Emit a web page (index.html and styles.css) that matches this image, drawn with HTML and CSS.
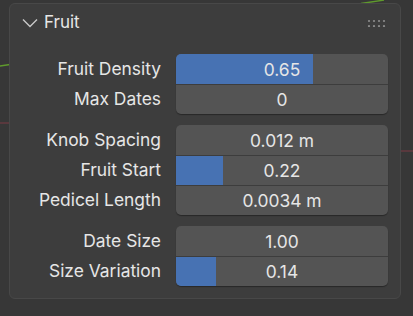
FILE: index.html
```html
<!DOCTYPE html>
<html lang="en">
<head>
    <meta charset="UTF-8">
    <title>Fruit</title>
<link rel="stylesheet" href="styles.css">
</head>
<body>
    <div id="viewport">
        <svg class="grid-lines" width="413" height="316" viewBox="0 0 413 316">
            <line x1="361" y1="3.5" x2="384" y2="0" stroke="#5f9a2c" stroke-width="1.3"/>
            <line x1="0" y1="66" x2="10" y2="64.5" stroke="#5f9a2c" stroke-width="1.3"/>
            <line x1="0" y1="123" x2="10" y2="123" stroke="#7c3a44" stroke-width="1"/>
            <line x1="400" y1="151" x2="413" y2="151" stroke="#7c3a44" stroke-width="1"/>
        </svg>

        <div class="panel">
            <div class="panel-head">
                <svg class="chevron" width="16" height="10" viewBox="0 0 16 10">
                    <polyline points="1,1.5 8,8.5 15,1.5" fill="none" stroke="#c8c8c8" stroke-width="1.4"/>
                </svg>
                <span class="panel-title">Fruit</span>
                <svg class="grip" width="20" height="8" viewBox="0 0 20 8">
                    <g fill="#8c8c8c">
                        <circle cx="2" cy="2" r="1.1"/><circle cx="7" cy="2" r="1.1"/>
                        <circle cx="12" cy="2" r="1.1"/><circle cx="17" cy="2" r="1.1"/>
                        <circle cx="2" cy="7" r="1.1"/><circle cx="7" cy="7" r="1.1"/>
                        <circle cx="12" cy="7" r="1.1"/><circle cx="17" cy="7" r="1.1"/>
                    </g>
                </svg>
            </div>

            <div class="panel-body">
                <div class="group">
                    <div class="labels">
                        <div class="label">Fruit Density</div>
                        <div class="label">Max Dates</div>
                    </div>
                    <div class="fields">
                        <div class="field"><div class="fill" style="width: 64.5%"></div><span class="value">0.65</span></div>
                        <div class="field"><span class="value">0</span></div>
                    </div>
                </div>

                <div class="group">
                    <div class="labels">
                        <div class="label">Knob Spacing</div>
                        <div class="label">Fruit Start</div>
                        <div class="label">Pedicel Length</div>
                    </div>
                    <div class="fields">
                        <div class="field"><span class="value">0.012 m</span></div>
                        <div class="field"><div class="fill" style="width: 22%"></div><span class="value">0.22</span></div>
                        <div class="field"><span class="value">0.0034 m</span></div>
                    </div>
                </div>

                <div class="group">
                    <div class="labels">
                        <div class="label">Date Size</div>
                        <div class="label">Size Variation</div>
                    </div>
                    <div class="fields">
                        <div class="field"><span class="value">1.00</span></div>
                        <div class="field"><div class="fill" style="width: 18.8%"></div><span class="value">0.14</span></div>
                    </div>
                </div>
            </div>
        </div>
    </div>
</body>
</html>
```

FILE: styles.css
```css
*{
    margin: 0;
    padding: 0;
    box-sizing: border-box;
}
body{
    background: #373737;
    font-family: "Inter", "DejaVu Sans", sans-serif;
    color: #e6e6e6;
}
#viewport{
    width: 413px;
    height: 316px;
    position: relative;
    overflow: hidden;
    padding: 3px 12px 0 9px;
}
.grid-lines{
    position: absolute;
    top: 0;
    left: 0;
}
.panel{
    position: relative;
    height: 296px;
    background: #3d3d3d;
    border: 1px solid #484848;
    border-radius: 6px;
}
.panel-head{
    height: 36px;
    display: flex;
    align-items: center;
    padding: 0 13px 0 12px;
}
.chevron{
    margin-right: 6px;
    margin-top: 1px;
}
.panel-title{
    font-size: 17px;
    flex: 1;
}
.grip{
    margin-top: 1px;
}
.panel-body{
    padding: 14px 11px 0 0;
    display: flex;
    flex-direction: column;
    gap: 11px;
}
.group{
    display: grid;
    grid-template-columns: 151px 212px;
    column-gap: 15px;
}
.label{
    height: 30px;
    line-height: 30px;
    text-align: right;
    font-size: 17.4px;
    white-space: nowrap;
}
.fields{
    border-radius: 5px;
    overflow: hidden;
    background: #545454;
    box-shadow: 0 1px 1px rgba(0, 0, 0, 0.35);
}
.field{
    position: relative;
    height: 30px;
    display: flex;
    align-items: center;
    justify-content: center;
}
.field + .field{
    border-top: 1px solid #3d3d3d;
}
.fill{
    position: absolute;
    top: 0;
    bottom: 0;
    left: 0;
    background: #4772b3;
}
.value{
    position: relative;
    font-size: 17.4px;
}
```
